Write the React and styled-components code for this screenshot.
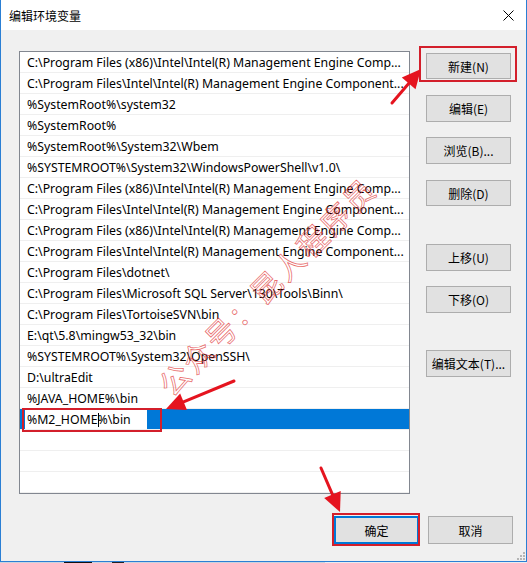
import React from "react"
import styled, { createGlobalStyle } from "styled-components"

const GlobalStyle = createGlobalStyle`
  html, body { margin: 0; padding: 0; background: #ffffff; }
  body { font-family: "Noto Sans", "Noto Sans CJK SC", sans-serif; }
`

const Page = styled.div`
  position: relative;
  width: 527px;
  height: 563px;
  overflow: hidden;
`

const Window = styled.div`
  width: 527px;
  height: 562px;
  box-sizing: border-box;
  border: 1px solid #2a7fd4;
  border-top: none;
  display: flex;
  flex-direction: column;
  background: #f0f0f0;
`

const TitleBar = styled.div`
  height: 30px;
  flex-shrink: 0;
  background: #ffffff;
  display: flex;
  align-items: center;
  justify-content: space-between;
  padding: 0 12px 0 8px;
`

const Title = styled.span`
  font-family: "Noto Sans CJK SC", sans-serif;
  font-size: 12px;
  color: #000;
`

const Body = styled.div`
  flex: 1;
  display: flex;
  flex-direction: column;
  padding: 21px 13px 0 18px;
`

const Main = styled.div`
  display: flex;
  gap: 16px;
`

const ListBox = styled.div`
  width: 391px;
  box-sizing: border-box;
  border: 1px solid #828790;
  background: #ffffff;
`

const Row = styled.div`
  height: 21px;
  box-sizing: border-box;
  border-bottom: 1px solid #efefef;
  display: flex;
  align-items: center;
  padding-left: 7px;
  font-family: "Noto Sans", sans-serif;
  font-size: 12.3px;
  color: #000;
  white-space: nowrap;
  overflow: ${(p) => (p.$selected ? "visible" : "hidden")};
  background: ${(p) => (p.$selected ? "#0078d7" : "#ffffff")};
`

const EditBox = styled.div`
  position: relative;
  margin-left: -2px;
  width: 122px;
  height: 19px;
  box-sizing: border-box;
  background: #ffffff;
  display: flex;
  align-items: center;
  padding-left: 2px;
`

const Caret = styled.span`
  display: inline-block;
  width: 1px;
  height: 14px;
  background: #000;
  vertical-align: middle;
  margin: 0 -1px 0 0;
`

const Mark = styled.div`
  position: absolute;
  left: ${(p) => p.$l}px;
  top: ${(p) => p.$t}px;
  right: ${(p) => p.$r}px;
  bottom: ${(p) => p.$b}px;
  border: 2px solid #d31f2b;
  pointer-events: none;
`

const ButtonCol = styled.div`
  display: flex;
  flex-direction: column;
  padding-top: 2px;
`

const Button = styled.div`
  position: relative;
  width: 85px;
  height: ${(p) => p.$h || 26}px;
  margin-top: ${(p) => p.$gap || 0}px;
  box-sizing: border-box;
  background: #e1e1e1;
  border: ${(p) => (p.$focus ? "2px solid #0078d7" : "1px solid #adadad")};
  display: flex;
  align-items: center;
  justify-content: center;
  font-family: "Noto Sans CJK SC", sans-serif;
  font-size: 12px;
  color: #000;
`

const Footer = styled.div`
  display: flex;
  justify-content: flex-end;
  gap: 9px;
  margin-top: 22px;
`

const Grip = styled.svg`
  position: absolute;
  right: 2px;
  bottom: 3px;
`

const Strip = styled.div`
  height: 1px;
  background: linear-gradient(90deg, #c9d3de 0 64px, #111 64px 92px, #c9d3de 92px 112px, #222 112px 124px, #c9d3de 124px 325px, #e8ecf0 325px);
`

const Overlay = styled.svg`
  position: absolute;
  left: 0;
  top: 0;
  pointer-events: none;
`

const Watermark = styled.div`
  position: absolute;
  left: 163px;
  top: 374px;
  line-height: 1;
  transform: rotate(-45deg);
  transform-origin: left center;
  font-family: "Noto Sans CJK SC", sans-serif;
  font-size: 30px;
  letter-spacing: 2.5px;
  color: transparent;
  -webkit-text-stroke: 0.8px rgba(226, 60, 60, 0.75);
  white-space: nowrap;
  pointer-events: none;
`

const paths = [
  "C:\\Program Files (x86)\\Intel\\Intel(R) Management Engine Comp...",
  "C:\\Program Files\\Intel\\Intel(R) Management Engine Component...",
  "%SystemRoot%\\system32",
  "%SystemRoot%",
  "%SystemRoot%\\System32\\Wbem",
  "%SYSTEMROOT%\\System32\\WindowsPowerShell\\v1.0\\",
  "C:\\Program Files (x86)\\Intel\\Intel(R) Management Engine Comp...",
  "C:\\Program Files\\Intel\\Intel(R) Management Engine Component...",
  "C:\\Program Files (x86)\\Intel\\Intel(R) Management Engine Comp...",
  "C:\\Program Files\\Intel\\Intel(R) Management Engine Component...",
  "C:\\Program Files\\dotnet\\",
  "C:\\Program Files\\Microsoft SQL Server\\130\\Tools\\Binn\\",
  "C:\\Program Files\\TortoiseSVN\\bin",
  "E:\\qt\\5.8\\mingw53_32\\bin",
  "%SYSTEMROOT%\\System32\\OpenSSH\\",
  "D:\\ultraEdit",
  "%JAVA_HOME%\\bin",
]

// red annotation arrow: tail -> tip
const Arrow = ({ from, to }) => {
  const [x1, y1] = from
  const [x2, y2] = to
  const len = Math.hypot(x2 - x1, y2 - y1)
  const ux = (x2 - x1) / len
  const uy = (y2 - y1) / len
  const hl = 19
  const hw = 9
  const bx = x2 - ux * hl
  const by = y2 - uy * hl
  const pts = `${x2},${y2} ${bx - uy * hw},${by + ux * hw} ${bx + uy * hw},${by - ux * hw}`
  return (
    <g>
      <line x1={x1} y1={y1} x2={bx + ux * 2} y2={by + uy * 2} stroke="#e5141f" strokeWidth="3" strokeLinecap="round" />
      <polygon points={pts} fill="#e5141f" />
    </g>
  )
}

export default function App() {
  return (
    <Page>
      <GlobalStyle />
      <Window>
        <TitleBar>
          <Title>编辑环境变量</Title>
          <svg width="11" height="11" viewBox="0 0 11 11">
            <path d="M0.5 0.5 L10.5 10.5 M10.5 0.5 L0.5 10.5" stroke="#000" strokeWidth="1" />
          </svg>
        </TitleBar>
        <Body>
          <Main>
            <ListBox>
              {paths.map((p, i) => (
                <Row key={i}>{p}</Row>
              ))}
              <Row $selected>
                <EditBox>
                  <span>
                    %M2_HOME<Caret />%\bin
                  </span>
                  <Mark $l={-3} $t={-2} $r={-15} $b={-3} />
                </EditBox>
              </Row>
              <Row />
              <Row />
              <Row />
            </ListBox>
            <ButtonCol>
              <Button>
                新建(N)
                <Mark $l={-8} $t={-8} $r={-7} $b={-4} />
              </Button>
              <Button $gap={16} $h={27}>编辑(E)</Button>
              <Button $gap={15} $h={27}>浏览(B)...</Button>
              <Button $gap={16}>删除(D)</Button>
              <Button $gap={38} $h={27}>上移(U)</Button>
              <Button $gap={15} $h={27}>下移(O)</Button>
              <Button $gap={37} $h={27}>编辑文本(T)...</Button>
            </ButtonCol>
          </Main>
          <Footer>
            <Button $focus $h={28}>
              确定
              <Mark $l={-4} $t={-5} $r={-3} $b={-4} />
            </Button>
            <Button $h={28}>取消</Button>
          </Footer>
        </Body>
      </Window>
      <Strip />
      <Grip width="8" height="8" viewBox="0 0 8 8">
        <g fill="#b5b5b5">
          <rect x="6" y="0" width="2" height="2" />
          <rect x="3" y="3" width="2" height="2" />
          <rect x="6" y="3" width="2" height="2" />
          <rect x="0" y="6" width="2" height="2" />
          <rect x="3" y="6" width="2" height="2" />
          <rect x="6" y="6" width="2" height="2" />
        </g>
      </Grip>
      <Watermark>公众号：昆人程序员</Watermark>
      <Overlay width="527" height="563">
        <Arrow from={[392, 103]} to={[421, 69]} />
        <Arrow from={[234, 381]} to={[166, 409]} />
        <Arrow from={[321, 468]} to={[340, 512]} />
      </Overlay>
    </Page>
  )
}
